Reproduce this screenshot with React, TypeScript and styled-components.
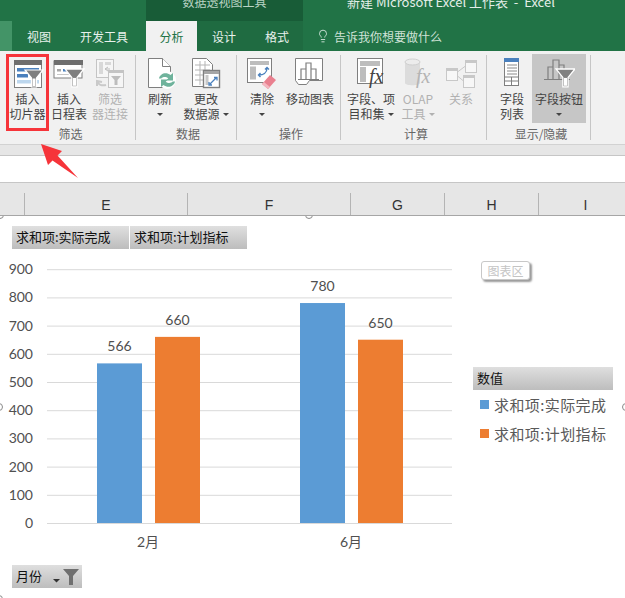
import React from "react";
import styled, { createGlobalStyle } from "styled-components";
import { Lightbulb } from "lucide-react";

const GlobalStyle = createGlobalStyle`
  html, body {
    margin: 0;
    padding: 0;
    background: #fff;
  }
  body {
    font-family: "Noto Sans CJK SC", "Noto Sans", sans-serif;
    font-size: 12px;
  }
`;

const Page = styled.div`
  position: relative;
  width: 625px;
  height: 598px;
  overflow: hidden;
  display: flex;
  flex-direction: column;
`;

const TitleBar = styled.div`
  display: flex;
  height: 21px;
  flex: none;
  background: #217346;
  overflow: hidden;
`;

const TitleSpacer = styled.div`
  width: 146px;
`;

const ContextTitle = styled.div`
  width: 157px;
  background: #185c37;
  color: #b9d3c4;
  display: flex;
  justify-content: center;
  align-items: flex-start;
  line-height: 12px;
  white-space: nowrap;
  & > span {
    margin-top: -4px;
  }
`;

const DocTitle = styled.div`
  padding-left: 44px;
  color: #e4eee8;
  font-size: 13px;
  line-height: 12px;
  white-space: pre;
  & > span {
    display: block;
    margin-top: -4px;
  }
`;

const TabBar = styled.div`
  display: flex;
  height: 30px;
  flex: none;
  background: #217346;
`;

const FileStub = styled.div`
  width: 12px;
  background: #439467;
`;

const TabGroup = styled.div`
  display: flex;
  background: #1f6b41;
  margin-left: 4px;
`;

const Tab = styled.div<{ $w: number; $active?: boolean }>`
  width: ${(p) => p.$w}px;
  display: flex;
  align-items: center;
  justify-content: center;
  font-size: 12px;
  color: ${(p) => (p.$active ? "#217346" : "#e8f1ec")};
  background: ${(p) => (p.$active ? "#f1f1f1" : "transparent")};
`;

const TellMe = styled.div`
  display: flex;
  align-items: center;
  gap: 4px;
  padding-left: 13px;
  color: #cfe2d7;
  font-size: 12px;
`;

const Ribbon = styled.div`
  display: flex;
  height: 90px;
  flex: none;
  padding-top: 3px;
  background: #f1f1f1;
  border-bottom: 1px solid #d2d2d2;
`;

const Group = styled.div<{ $w: number; $pad: number }>`
  width: ${(p) => p.$w}px;
  box-sizing: border-box;
  padding-left: ${(p) => p.$pad}px;
  height: 85px;
  margin-top: 1px;
  border-right: 1px solid #c6c6c6;
  display: flex;
  flex-direction: column;
`;

const GroupRow = styled.div`
  display: flex;
  height: 68px;
  margin-top: -1px;
`;

const GroupName = styled.div<{ $pad?: number }>`
  margin-top: 4px;
  margin-left: ${(p) => p.$pad ?? 0}px;
  line-height: 15px;
  text-align: center;
  color: #666;
`;

const RibbonButton = styled.div<{ $w: number; $on?: boolean; $off?: boolean }>`
  width: ${(p) => p.$w}px;
  height: 69px;
  box-sizing: border-box;
  padding-top: 3px;
  display: flex;
  flex-direction: column;
  align-items: center;
  background: ${(p) => (p.$on ? "#c6c6c6" : "transparent")};
  color: ${(p) => (p.$off ? "#b1b1b1" : "#444")};
`;

const ButtonLabel = styled.div`
  margin-top: 2px;
  line-height: 15px;
  text-align: center;
  white-space: nowrap;
`;

const Caret = styled.span<{ $off?: boolean }>`
  display: inline-block;
  width: 0;
  height: 0;
  margin: 0 0 2px 3px;
  border-left: 3px solid transparent;
  border-right: 3px solid transparent;
  border-top: 3px solid ${(p) => (p.$off ? "#b1b1b1" : "#444")};
  vertical-align: middle;
`;

const SoloCaret = styled(Caret)`
  margin-left: 0;
`;

const BarStrip = styled.div`
  height: 10px;
  flex: none;
  background: #e6e6e6;
  border-bottom: 1px solid #c6c6c6;
`;

const FormulaBar = styled.div`
  height: 26px;
  flex: none;
  background: #fff;
  border-bottom: 1px solid #c6c6c6;
`;

const ColumnHeaders = styled.div`
  display: flex;
  height: 33px;
  flex: none;
  box-sizing: border-box;
  padding-top: 10px;
  background: #e6e6e6;
  border-bottom: 1px solid #a6a6a6;
`;

const ColumnCell = styled.div<{ $w: number }>`
  width: ${(p) => p.$w}px;
  flex: none;
  border-right: 1px solid #b4b4b4;
  box-sizing: border-box;
  text-align: center;
  font-family: "Liberation Sans", sans-serif;
  font-size: 14px;
  line-height: 24px;
  color: #333;
`;

const ChartArea = styled.div`
  position: relative;
  flex: 1;
  background: #fff;
  overflow: hidden;
`;

const FieldRow = styled.div`
  display: flex;
  gap: 1px;
  padding: 10px 0 0 12px;
`;

const FieldButton = styled.div<{ $w: number }>`
  width: ${(p) => p.$w}px;
  height: 23px;
  box-sizing: border-box;
  padding: 0 0 2px 4px;
  display: flex;
  align-items: center;
  font-size: 13px;
  line-height: 20px;
  color: #111;
  background: linear-gradient(#dfdfdf, #bdbdbd);
`;

const PlotRow = styled.div`
  display: flex;
`;

const Plot = styled.svg`
  display: block;
  flex: none;
  width: 465px;
  height: 306px;
`;

const Legend = styled.div`
  margin: 118px 0 0 8px;
  width: 140px;
`;

const LegendEntry = styled.div`
  display: flex;
  align-items: center;
  gap: 5px;
  height: 29px;
  padding-left: 7px;
  font-size: 15px;
  letter-spacing: 0.4px;
  color: #595959;
  white-space: nowrap;
`;

const Swatch = styled.span<{ $c: string }>`
  width: 9px;
  height: 9px;
  background: ${(p) => p.$c};
  flex: none;
`;

const MonthRow = styled.div`
  padding: 10px 0 0 12px;
`;

const MonthFilter = styled.svg`
  margin-left: auto;
  margin-right: 1px;
  margin-bottom: -2px;
  flex: none;
`;

const ChartTip = styled.div`
  position: absolute;
  left: 481px;
  top: 45px;
  width: 49px;
  height: 19px;
  box-sizing: border-box;
  border: 1px solid #c8c8c8;
  border-radius: 3px;
  background: #fff;
  box-shadow: 2px 2px 2px #9a9a9a;
  color: #c4c4c4;
  text-align: center;
  line-height: 17px;
`;

const Handle = styled.span<{ $x: number; $y: number }>`
  position: absolute;
  left: ${(p) => p.$x - 4}px;
  top: ${(p) => p.$y - 4}px;
  width: 6px;
  height: 6px;
  border: 1.5px solid #8a8a8a;
  border-radius: 50%;
  background: #fff;
`;

const Highlight = styled.div`
  position: absolute;
  left: 6px;
  top: 54px;
  width: 43px;
  height: 77px;
  box-sizing: border-box;
  border: 3px solid #f6343a;
`;

const Arrow = styled.svg`
  position: absolute;
  left: 36px;
  top: 140px;
`;

const IconBox = styled.svg`
  width: 32px;
  height: 32px;
  flex: none;
  display: block;
`;

const GRAY = "#7f7f7f";
const DARK = "#6e6e6e";
const BLUE = "#4a80bd";

const Funnel = ({ x, y, s = 1, c = "#7f7f7f" }: { x: number; y: number; s?: number; c?: string }) => (
  <g transform={`translate(${x} ${y}) scale(${s})`}>
    <path d="M0 0h18l-6.5 8v9h-5V8z" fill={c} stroke="#fff" strokeWidth="1.2" />
    <path d="M7.5 8.5v7.5h3V8.5" fill="#fff" />
  </g>
);

const SlicerIcon = () => (
  <IconBox viewBox="0 0 32 32">
    <rect x="2.5" y="3.5" width="27" height="27" fill="#fff" stroke={GRAY} />
    <rect x="2" y="3" width="28" height="5" fill={DARK} />
    <rect x="5" y="11" width="22" height="3.5" fill={BLUE} />
    <rect x="5" y="17" width="11" height="3.5" fill={BLUE} />
    <rect x="5" y="23" width="22" height="3.5" fill="#bdd7ee" />
    <Funnel x={13} y={13} />
  </IconBox>
);

const TimelineIcon = () => (
  <IconBox viewBox="0 0 32 32">
    <rect x="1" y="4" width="28" height="17" fill="#fff" stroke={GRAY} />
    <rect x="1" y="3" width="29" height="5" fill={DARK} />
    <rect x="4" y="12" width="4" height="2.5" fill="#a6a6a6" />
    <rect x="10" y="12" width="4" height="2.5" fill={BLUE} />
    <rect x="16" y="12" width="4" height="2.5" fill={BLUE} />
    <rect x="4" y="17" width="20" height="1" fill="#c8c8c8" />
    <Funnel x={12} y={12} s={1.05} />
  </IconBox>
);

const ConnectIcon = () => (
  <IconBox viewBox="0 0 32 32">
    <rect x="2.5" y="2.5" width="17" height="18" fill="#f6f6f6" stroke="#c4c4c4" />
    <rect x="5" y="5" width="4" height="12" fill="#d8d8d8" />
    <rect x="11" y="5" width="6" height="3" fill="#d8d8d8" />
    <rect x="14.5" y="13.5" width="15" height="17" fill="#f6f6f6" stroke="#c4c4c4" />
    <rect x="14" y="13" width="16" height="3" fill="#c4c4c4" />
    <path d="M17 19h10l-3.5 4v5h-3v-5z" fill="#bdbdbd" />
    <path d="M3 24c1 4 5 5 9 4M3 29l0-5 5 1" fill="none" stroke="#c9c9c9" strokeWidth="2" />
    <path d="M14 10l-3 2 3 2M11 12h5" fill="none" stroke="#bdbdbd" />
  </IconBox>
);

const RefreshIcon = () => (
  <IconBox viewBox="0 0 32 32">
    <path d="M4.5 1.5h14l8 8v21h-22z" fill="#fff" stroke={GRAY} />
    <path d="M18.5 1.5v8h8" fill="#fff" stroke={GRAY} />
    <circle cx="23" cy="23" r="9" fill="#fff" />
    <path d="M15 21.5c1-5 7-7 11.500-3.500l2.500-2v7.500h-7l2.300-2.200c-2.500-2-6-1.300-7 .2z" fill="#6fb39c" />
    <path d="M31 24.500c-1 5-7 7-11.500 3.500l-2.500 2v-7.500h7l-2.300 2.200c2.500 2 6 1.300 7-.2z" fill="#6fb39c" />
  </IconBox>
);

const SourceIcon = () => (
  <IconBox viewBox="0 0 32 32">
    <path d="M2.500 1.500h14l6 6v22h-20z" fill="#fff" stroke={GRAY} />
    <path d="M5 8h15M5 13h15M5 18h15M5 23h15M10 4v24M15 4v24" stroke="#b5b5b5" fill="none" />
    <rect x="13.500" y="13.500" width="16" height="17" fill="#fff" stroke={GRAY} strokeWidth="1.4" />
    <rect x="14" y="14" width="15" height="3" fill="#a6a6a6" />
    <rect x="15.500" y="18" width="3" height="10" fill="#c8c8c8" />
    <path d="M20 27l6-6M24 20.500h3v3M22 28h-3v-3" fill="none" stroke={BLUE} strokeWidth="1.300" />
  </IconBox>
);

const ClearIcon = () => (
  <IconBox viewBox="0 0 32 32">
    <rect x="1.500" y="1.500" width="24" height="24" fill="#fff" stroke={GRAY} />
    <rect x="4" y="4" width="19" height="4" fill="#bdbdbd" />
    <rect x="4" y="9.500" width="6" height="13" fill="#bdbdbd" />
    <path d="M13 18c4 0 8-2 8-7M19 12.500l2-2 2 2M14.500 16l-2 2 2 2" fill="none" stroke={BLUE} strokeWidth="1.400" />
    <path d="M24 18l6 5-8 9-6-5z" fill="#e9808f" />
    <path d="M16 27l6 5 2-2-6-5z" fill="#f4b6bf" />
  </IconBox>
);

const MoveChartIcon = () => (
  <IconBox viewBox="0 0 32 32">
    <path d="M1.500 1.500h27v22h-13l-3 4h-8l-3-4z" fill="#fff" stroke={GRAY} />
    <path d="M7 22V12h5v10M12 22V6h5v16M17 22V12h5v10" fill="#fff" stroke={GRAY} strokeWidth="1.200" />
    <path d="M4 22.500h21" stroke={GRAY} />
  </IconBox>
);

const FxIcon = () => (
  <IconBox viewBox="0 0 32 32">
    <rect x="2.500" y="1.500" width="25" height="25" fill="#fff" stroke={GRAY} />
    <rect x="5" y="4" width="20" height="5" fill="#bdbdbd" />
    <rect x="5" y="10" width="6" height="15" fill="#bdbdbd" />
    <text x="14" y="26" fontFamily="'Liberation Serif', serif" fontStyle="italic" fontSize="20" fill="#444">
      fx
    </text>
  </IconBox>
);

const OlapIcon = () => (
  <IconBox viewBox="0 0 32 32">
    <path d="M3 5v21c0 3 15 3 15 0V5z" fill="#dcdcdc" />
    <ellipse cx="10.500" cy="5" rx="7.500" ry="3" fill="#ececec" stroke="#d0d0d0" />
    <text x="14" y="26" fontFamily="'Liberation Serif', serif" fontStyle="italic" fontSize="20" fill="#b4b4b4">
      fx
    </text>
  </IconBox>
);

const RelationsIcon = () => (
  <IconBox viewBox="0 0 32 32">
    <g fill="#f7f7f7" stroke="#c8c8c8">
      <rect x="1.500" y="11.500" width="11" height="12" />
      <rect x="20.500" y="3.500" width="11" height="12" />
      <rect x="18.500" y="18.500" width="11" height="12" />
    </g>
    <g fill="#c8c8c8">
      <rect x="1.500" y="11.500" width="11" height="2.500" />
      <rect x="20.500" y="3.500" width="11" height="2.500" />
      <rect x="18.500" y="18.500" width="11" height="2.500" />
    </g>
    <path d="M12.500 15l8-6M12.500 19l6 5" stroke="#c8c8c8" fill="none" />
  </IconBox>
);

const FieldListIcon = () => (
  <IconBox viewBox="0 0 32 32">
    <rect x="8.500" y="1.500" width="14" height="27" fill="#fff" stroke={GRAY} />
    <rect x="8" y="1" width="15" height="4" fill={BLUE} />
    <path d="M11 8h10M11 11h10M11 14h10M11 17h10" stroke="#8a8a8a" fill="none" />
    <path d="M8.500 20h14M15.500 20v8M8.500 24h14" stroke={GRAY} fill="none" />
  </IconBox>
);

const FieldButtonsIcon = () => (
  <IconBox viewBox="0 0 32 32">
    <path d="M5 22V10h5v12M10 22V3h6v19M16 22V8h5v14" fill="none" stroke={GRAY} strokeWidth="1.200" />
    <path d="M1 22.500h26" stroke={GRAY} />
    <Funnel x={13} y={12} s={1.05} c="#808080" />
  </IconBox>
);

const columns = [
  { w: 25, name: "" },
  { w: 163, name: "E" },
  { w: 163, name: "F" },
  { w: 94, name: "G" },
  { w: 94, name: "H" },
  { w: 94, name: "I" },
];

const ticks = [0, 100, 200, 300, 400, 500, 600, 700, 800, 900];
const BASE = 523;
const STEP = 28.2 / 100;

const bars = [
  { x: 97, v: 566, c: "#5b9bd5" },
  { x: 155, v: 660, c: "#ed7d31" },
  { x: 300, v: 780, c: "#5b9bd5" },
  { x: 358, v: 650, c: "#ed7d31" },
];

const ChartLabel = styled.text`
  font-family: Lato, "Noto Sans CJK SC", sans-serif;
  font-size: 14px;
  fill: #505050;
`;

function ColumnChart() {
  return (
    <Plot viewBox="0 249 465 306">
      {ticks.map((t) => (
        <g key={t}>
          <line x1="47" x2="452" y1={BASE - t * STEP + 0.5} y2={BASE - t * STEP + 0.5} stroke="#d9d9d9" />
          <ChartLabel x="33" y={BASE - t * STEP + 5} textAnchor="end">
            {t}
          </ChartLabel>
        </g>
      ))}
      {bars.map((b) => (
        <g key={b.x}>
          <rect x={b.x} y={BASE - b.v * STEP} width="45" height={b.v * STEP} fill={b.c} />
          <ChartLabel x={b.x + 22.5} y={BASE - b.v * STEP - 12} textAnchor="middle">
            {b.v}
          </ChartLabel>
        </g>
      ))}
      <ChartLabel x="148" y="547" textAnchor="middle">
        2月
      </ChartLabel>
      <ChartLabel x="351" y="547" textAnchor="middle">
        6月
      </ChartLabel>
    </Plot>
  );
}

export default function App() {
  return (
    <Page>
      <GlobalStyle />
      <TitleBar>
        <TitleSpacer />
        <ContextTitle>
          <span>数据透视图工具</span>
        </ContextTitle>
        <DocTitle>
          <span>新建 Microsoft Excel 工作表  -  Excel</span>
        </DocTitle>
      </TitleBar>

      <TabBar>
        <FileStub />
        <Tab $w={54}>视图</Tab>
        <Tab $w={76}>开发工具</Tab>
        <TabGroup>
          <Tab $w={51} $active>
            分析
          </Tab>
          <Tab $w={54}>设计</Tab>
          <Tab $w={52}>格式</Tab>
        </TabGroup>
        <TellMe>
          <Lightbulb size={14} strokeWidth={1.4} color="#e8f1ec" />
          告诉我你想要做什么
        </TellMe>
      </TabBar>

      <Ribbon>
        <Group $w={136} $pad={6}>
          <GroupRow>
            <RibbonButton $w={43}>
              <SlicerIcon />
              <ButtonLabel>
                插入
                <br />
                切片器
              </ButtonLabel>
            </RibbonButton>
            <RibbonButton $w={40}>
              <TimelineIcon />
              <ButtonLabel>
                插入
                <br />
                日程表
              </ButtonLabel>
            </RibbonButton>
            <RibbonButton $w={42} $off>
              <ConnectIcon />
              <ButtonLabel>
                筛选
                <br />
                器连接
              </ButtonLabel>
            </RibbonButton>
          </GroupRow>
          <GroupName>筛选</GroupName>
        </Group>

        <Group $w={101} $pad={4}>
          <GroupRow>
            <RibbonButton $w={40}>
              <RefreshIcon />
              <ButtonLabel>
                刷新
                <br />
                <SoloCaret />
              </ButtonLabel>
            </RibbonButton>
            <RibbonButton $w={52}>
              <SourceIcon />
              <ButtonLabel>
                更改
                <br />
                数据源
                <Caret />
              </ButtonLabel>
            </RibbonButton>
          </GroupRow>
          <GroupName>数据</GroupName>
        </Group>

        <Group $w={104} $pad={5}>
          <GroupRow>
            <RibbonButton $w={40}>
              <ClearIcon />
              <ButtonLabel>
                清除
                <br />
                <SoloCaret />
              </ButtonLabel>
            </RibbonButton>
            <RibbonButton $w={56}>
              <MoveChartIcon />
              <ButtonLabel>移动图表</ButtonLabel>
            </RibbonButton>
          </GroupRow>
          <GroupName>操作</GroupName>
        </Group>

        <Group $w={146} $pad={5}>
          <GroupRow>
            <RibbonButton $w={50}>
              <FxIcon />
              <ButtonLabel>
                字段、项
                <br />
                目和集
                <Caret />
              </ButtonLabel>
            </RibbonButton>
            <RibbonButton $w={44} $off>
              <OlapIcon />
              <ButtonLabel>
                OLAP
                <br />
                工具
                <Caret $off />
              </ButtonLabel>
            </RibbonButton>
            <RibbonButton $w={42} $off>
              <RelationsIcon />
              <ButtonLabel>关系</ButtonLabel>
            </RibbonButton>
          </GroupRow>
          <GroupName>计算</GroupName>
        </Group>

        <Group $w={104} $pad={5}>
          <GroupRow>
            <RibbonButton $w={40}>
              <FieldListIcon />
              <ButtonLabel>
                字段
                <br />
                列表
              </ButtonLabel>
            </RibbonButton>
            <RibbonButton $w={54} $on>
              <FieldButtonsIcon />
              <ButtonLabel>
                字段按钮
                <br />
                <SoloCaret />
              </ButtonLabel>
            </RibbonButton>
          </GroupRow>
          <GroupName>显示/隐藏</GroupName>
        </Group>
      </Ribbon>

      <BarStrip />
      <FormulaBar />

      <ColumnHeaders>
        {columns.map((c) => (
          <ColumnCell key={c.name || "corner"} $w={c.w}>
            {c.name}
          </ColumnCell>
        ))}
      </ColumnHeaders>

      <ChartArea>
        <FieldRow>
          <FieldButton $w={117}>求和项:实际完成</FieldButton>
          <FieldButton $w={117}>求和项:计划指标</FieldButton>
        </FieldRow>
        <PlotRow>
          <ColumnChart />
          <Legend>
            <FieldButton $w={140}>数值</FieldButton>
            <LegendEntry>
              <Swatch $c="#5b9bd5" />
              求和项:实际完成
            </LegendEntry>
            <LegendEntry>
              <Swatch $c="#ed7d31" />
              求和项:计划指标
            </LegendEntry>
          </Legend>
        </PlotRow>
        <MonthRow>
          <FieldButton $w={70}>
            月份
            <MonthFilter width="28" height="18" viewBox="0 0 28 18">
              <path d="M0 11h7l-3.500 3.500z" fill="#333" />
              <path d="M10 1h16l-6 7v9h-4V8z" fill="#6f6f6f" />
            </MonthFilter>
          </FieldButton>
        </MonthRow>
        <ChartTip>图表区</ChartTip>
        <Handle $x={0} $y={-1} />
        <Handle $x={309} $y={-1} />
        <Handle $x={-1} $y={191} />
        <Handle $x={626} $y={191} />
        <Handle $x={-1} $y={383} />
      </ChartArea>

      <Highlight />
      <Arrow width="46" height="42" viewBox="0 0 46 42">
        <path d="M5 4L26 11 21.500 15.500 42 38 16.500 20.500 12 25z" fill="#f6343a" />
      </Arrow>
    </Page>
  );
}
